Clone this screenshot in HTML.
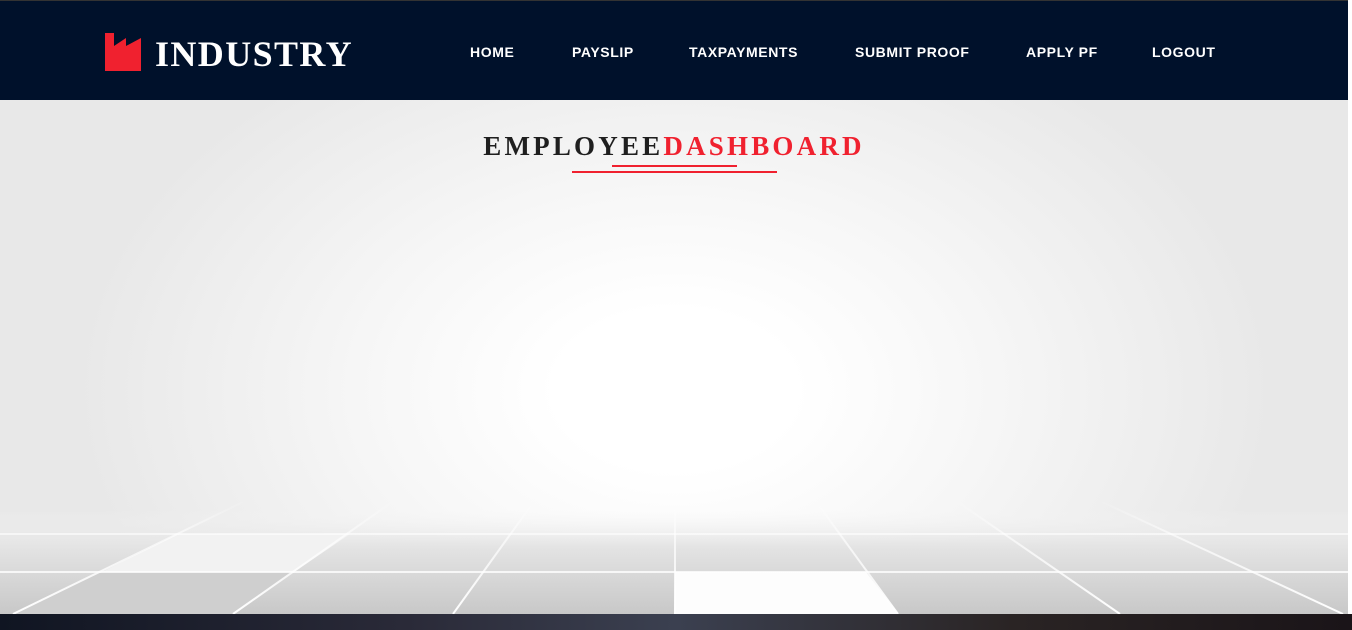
<!DOCTYPE html>
<html><head><meta charset="utf-8"><style>
*{margin:0;padding:0;box-sizing:border-box}
body{width:1352px;height:630px;overflow:hidden;background:#eee;font-family:"Liberation Sans",sans-serif;position:relative}
.hdr{position:absolute;left:0;top:0;width:1352px;height:100px;background:#00112b;border-top:1px solid #333}
.logo{position:absolute;left:155px;top:31px;color:#fff;font-family:"Liberation Serif",serif;font-weight:bold;font-size:36px;letter-spacing:1.4px;line-height:44px}
nav{position:absolute;top:43px;left:470px;font-size:14px;font-weight:bold;color:#fff;letter-spacing:0.6px}
nav span{position:absolute;white-space:nowrap}
.bg{position:absolute;left:0;top:100px;width:1348px;height:514px;background:radial-gradient(ellipse 600px 400px at 675px 290px,#fff 0%,#fff 20%,#f7f7f7 50%,#e8e8e8 100%)}
.title{position:absolute;top:131px;left:0;width:1348px;text-align:center;font-family:"Liberation Serif",serif;font-weight:bold;font-size:27px;letter-spacing:3.2px;color:#1f1f1f}
.title b{color:#f0212f}
.bot{position:absolute;left:0;top:614px;width:1352px;height:16px;background:linear-gradient(90deg,#101522,#2a2a38 30%,#3b4050 50%,#2a2424 75%,#1a1418)}
.sb{position:absolute;right:0;top:0;width:4px;height:614px;background:#fff}
</style></head><body>
<div class="hdr">
<svg style="position:absolute;left:104px;top:32px" width="40" height="40" viewBox="0 0 40 40"><path d="M1 0H10V13L22 5V13L37 5V38H1Z" fill="#f0212f"/></svg>
<div class="logo">INDUSTRY</div>
<nav><span style="left:0">HOME</span><span style="left:102px">PAYSLIP</span><span style="left:219px">TAXPAYMENTS</span><span style="left:385px">SUBMIT PROOF</span><span style="left:556px">APPLY PF</span><span style="left:682px">LOGOUT</span></nav>
</div>
<div class="bg">
<svg width="1348" height="514" style="position:absolute;left:0;top:0">
<defs><linearGradient id="g" x1="0" y1="0" x2="0" y2="1"><stop offset="0" stop-color="#f4f4f4" stop-opacity="0"/><stop offset="0.35" stop-color="#e4e4e4"/><stop offset="1" stop-color="#c8c8c8"/></linearGradient>
<linearGradient id="lf" x1="0" y1="400" x2="0" y2="514" gradientUnits="userSpaceOnUse"><stop offset="0" stop-color="#fff" stop-opacity="0"/><stop offset="0.3" stop-color="#fff" stop-opacity="0.6"/><stop offset="1" stop-color="#fff" stop-opacity="1"/></linearGradient></defs>
<rect x="0" y="410" width="1348" height="104" fill="url(#g)"/>
<polygon points="102,472 294,472 233,514 13,514" fill="#cfcfcf"/>
<polygon points="675,472 866,472 898,514 675,514" fill="#fdfdfd"/>
<polygon points="177,434 350,434 294,472 102,472" fill="#f2f2f2"/>
<g stroke="url(#lf)" stroke-width="2" fill="none">
<line x1="0" y1="434" x2="1348" y2="434.01"/>
<line x1="0" y1="472" x2="1348" y2="472.01"/>
<line x1="247" y1="400" x2="13" y2="514"/>
<line x1="395" y1="400" x2="233" y2="514"/>
<line x1="535" y1="400" x2="453" y2="514"/>
<line x1="675" y1="400" x2="675.01" y2="514"/>
<line x1="815" y1="400" x2="898" y2="514"/>
<line x1="955" y1="400" x2="1120" y2="514"/>
<line x1="1098" y1="400" x2="1343" y2="514"/>
</g>
</svg>
</div>
<div class="title">EMPLOYEE<b>DASHBOARD</b></div>
<div style="position:absolute;left:612px;top:165px;width:125px;height:2px;background:#f0212f"></div>
<div style="position:absolute;left:572px;top:171px;width:205px;height:2px;background:#f0212f"></div>
<div class="sb"></div>
<div class="bot"></div>
</body></html>
